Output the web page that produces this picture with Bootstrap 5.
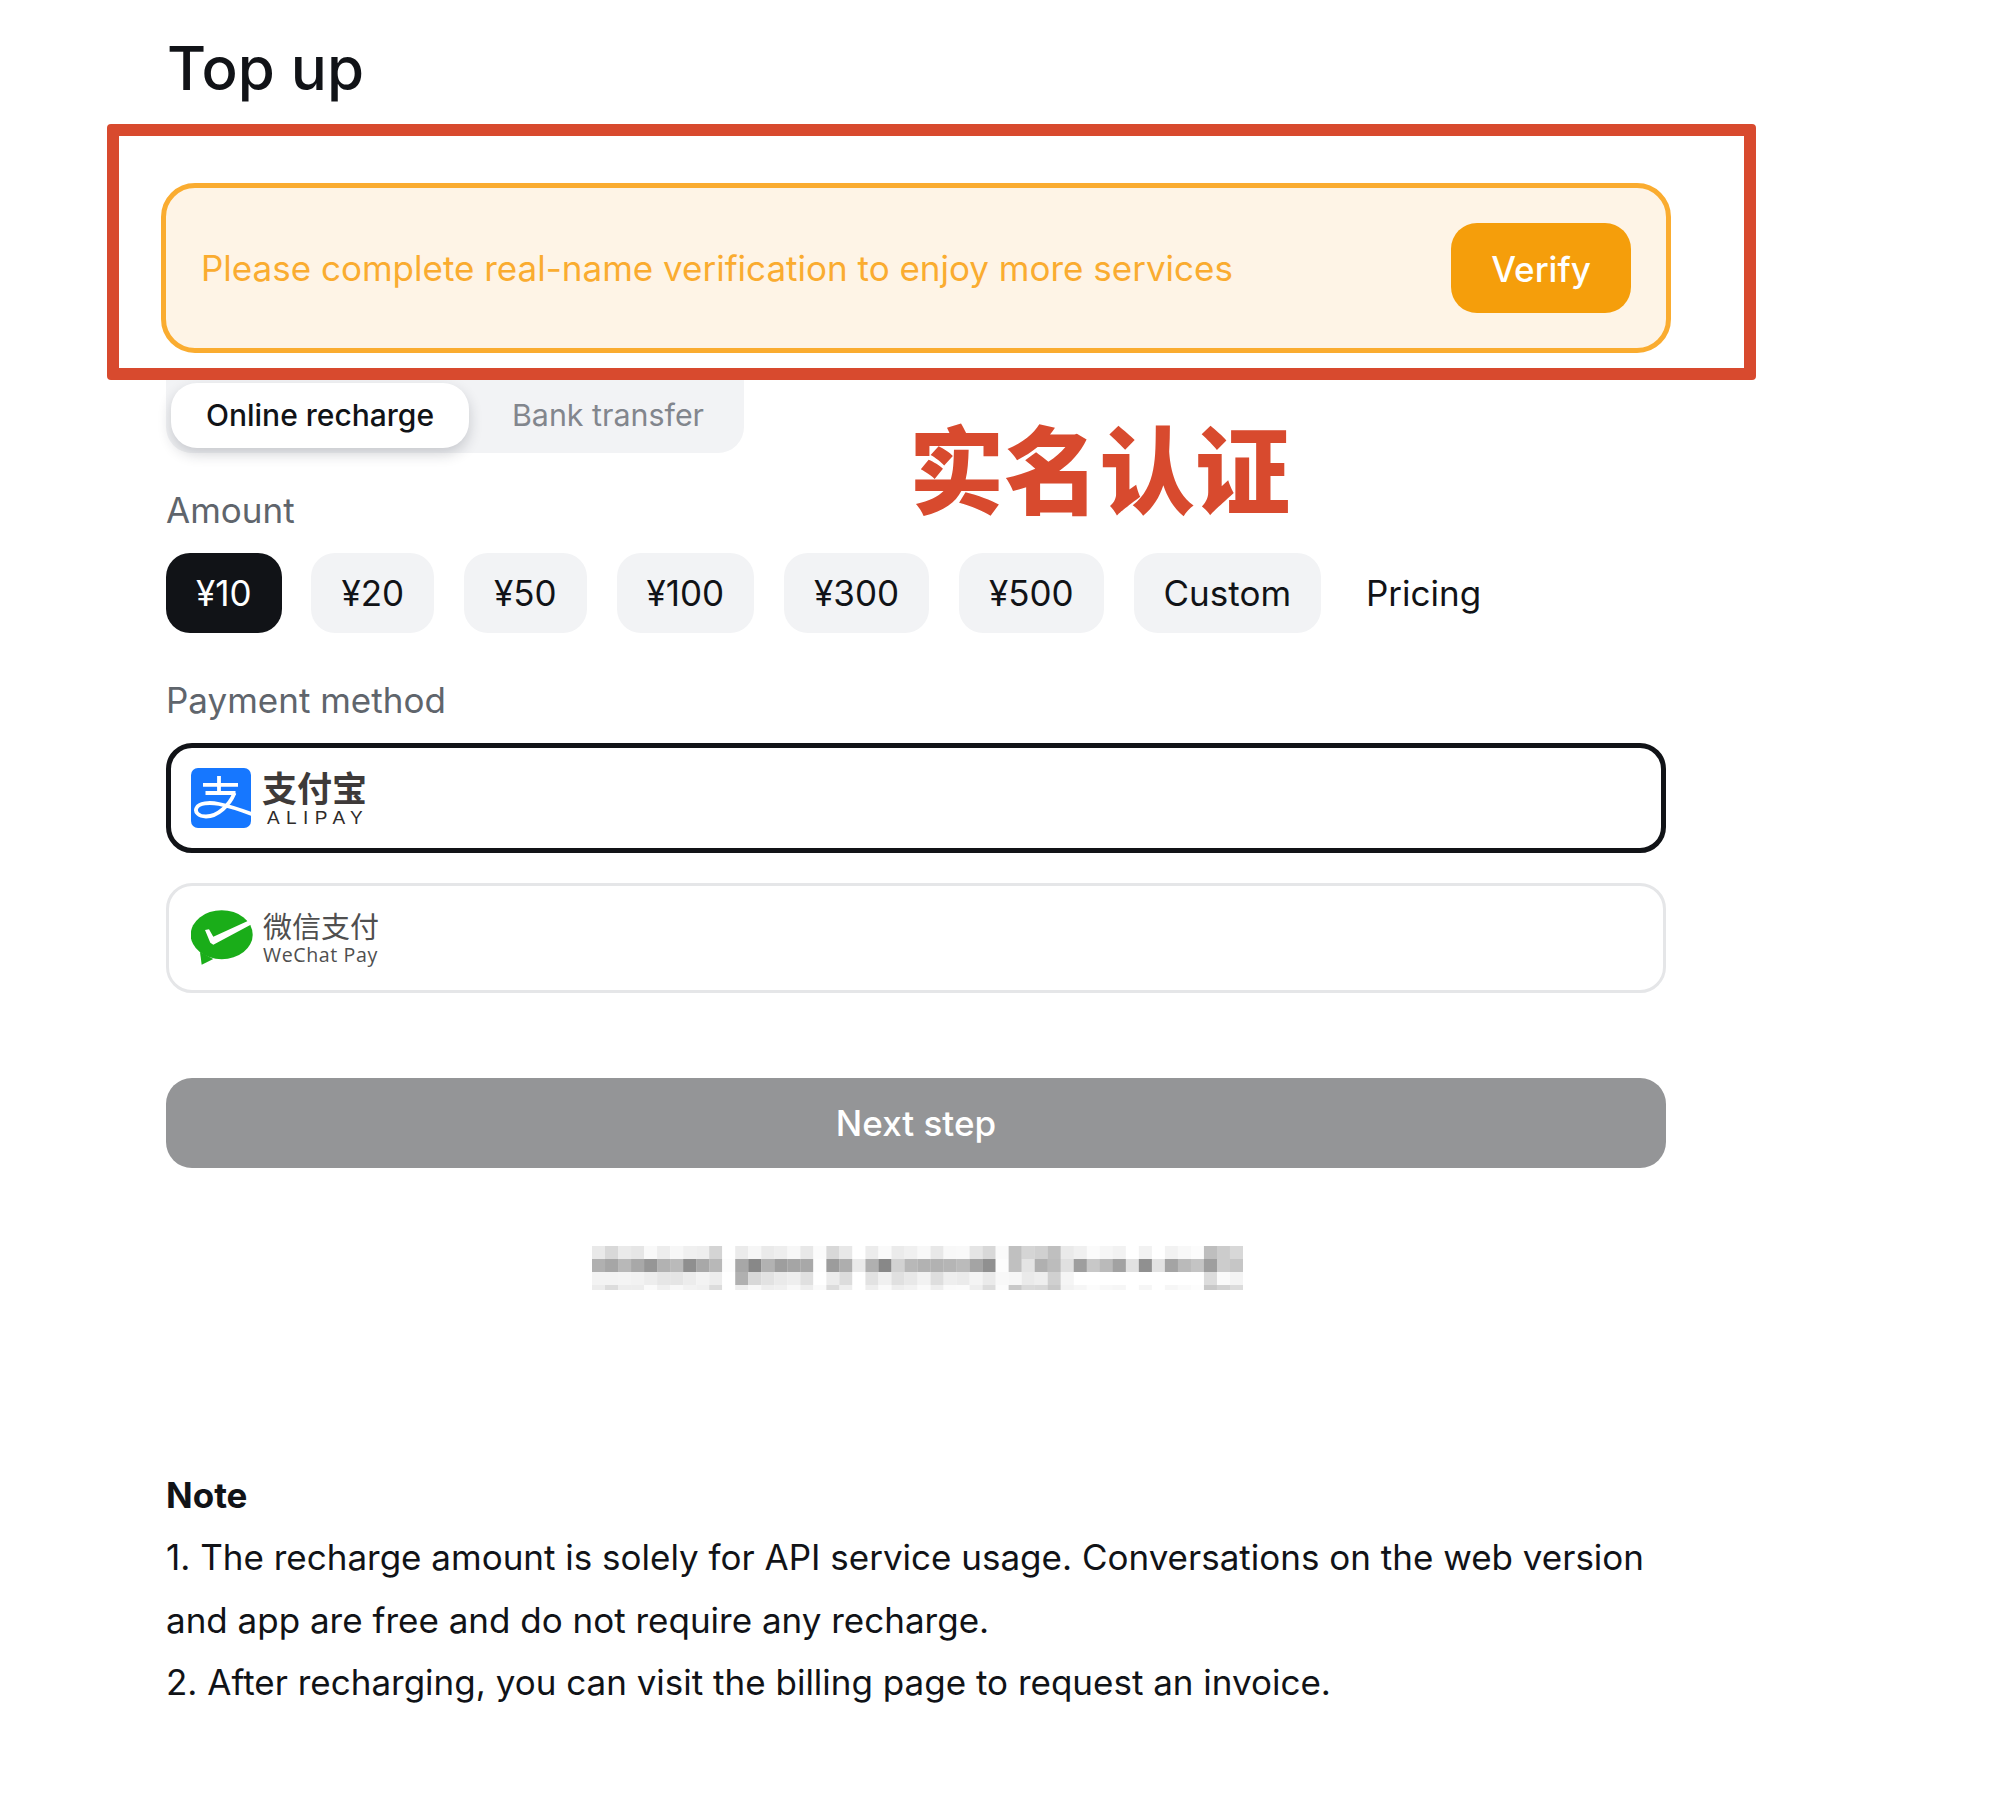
<!DOCTYPE html>
<html lang="en">
<head>
<meta charset="utf-8">
<title>Top up</title>
<link href="https://cdn.jsdelivr.net/npm/bootstrap@5.3.0/dist/css/bootstrap.min.css" rel="stylesheet">
<style>
body{font-family:Inter,"Noto Sans CJK SC",sans-serif;color:#111317;background:#fff;margin:0}
.tu-stage{position:relative;width:2011px;height:1796px;overflow:hidden}
.tu-col{width:1500px;margin-left:166px}
.tu-title{font-size:60px;font-weight:500;line-height:72px;margin:0;padding:32px 0 0 1px;height:183px;color:#111317}
.tu-alert{margin:0 -5px 0 -5px;height:170px;background:#fef4e6;border:5px solid #faac30;border-radius:34px;padding:0 35px 0 35px}
.tu-alert-text{font-size:35px;color:#faac30;line-height:44px}
.tu-verify{width:180px;height:90px;background:#f59e0b;border:0;border-radius:26px;color:#fff;font-size:35px;font-weight:500;padding:2px 0 0}
.tu-verify:hover{background:#f59e0b;color:#fff}
.tu-tabs{margin-top:25px;width:578px;height:75px;background:#f2f3f5;border-radius:0 0 26px 26px;padding:5px}
.tu-tab{height:65px;line-height:40px;display:flex;align-items:center;justify-content:center;border:0;border-radius:26px;padding-bottom:2px}
.tu-tab-on{width:298px;background:#fff;color:#111317;font-weight:500;font-size:30px;box-shadow:0 6px 14px rgba(30,36,48,.2)}
.tu-tab-off{width:270px;background:transparent;color:#82868d;font-size:30.4px;padding-left:8px}
.tu-label{font-size:35px;line-height:44px;color:#5f656c;margin-top:35px;margin-bottom:21px}
.tu-label-pay{margin-top:45px}
.tu-amounts{gap:29.9px;height:80px}
.tu-amt{height:80px;padding:0 30px;border:0;border-radius:24px;background:#f2f3f5;color:#111317;font-size:35px;line-height:80px}
.tu-amt:hover{background:#f2f3f5;color:#111317}
.tu-amt-on,.tu-amt-on:hover{background:#111317;color:#fff}
.tu-pricing{font-size:35px;line-height:80px;padding:0 0 0 15px;color:#111317}
.tu-pay{height:110px;border-radius:26px;background:#fff}
.tu-pay-on{border:5px solid #111317;padding:0 20px;gap:11px}
.tu-pay-off{border:3px solid #e5e6e8;margin-top:30px;padding:0 22px;gap:10px}
.tu-logo{width:60px;height:60px;flex:none}
.tu-logo-we{width:62px;height:56px;flex:none}
.tu-ali-cn{font-size:35px;font-weight:700;line-height:38px;color:#3e3a39}
.tu-ali-en{font-size:19px;line-height:19px;color:#2f2b2a;letter-spacing:6.4px;padding-left:5px;font-family:"Liberation Sans",sans-serif}
.tu-we-cn{font-size:29px;line-height:33px;color:#4f4f4f}
.tu-we-en{font-size:19.6px;line-height:21px;color:#4f4f4f;font-family:"Open Sans",sans-serif;letter-spacing:.6px}
.tu-next{display:block;width:100%;height:90px;margin-top:85px;background:#949597;border:0;border-radius:26px;color:#fff;font-size:35px;font-weight:500;padding:0}
.tu-next:hover{background:#949597;color:#fff}
.tu-blur{display:block;width:651px;height:44px;margin:78px 0 0 426px}
.tu-note{margin-top:173.5px;font-size:35px;line-height:62.6px;color:#111317}
.tu-note-h{font-weight:700}
.tu-frame{position:absolute;left:107px;top:124px;width:1649px;height:256px;border:12px solid #d84a2e;border-radius:4px;pointer-events:none}
.tu-stamp{position:absolute;left:909px;top:407px;font-family:"Noto Sans CJK SC",sans-serif;font-weight:900;font-size:95.3px;line-height:116px;color:#d84a2e;white-space:nowrap}
</style>
</head>
<body>
<div class="tu-stage">
  <div class="tu-col">
    <h1 class="tu-title">Top up</h1>
    <div class="tu-alert d-flex align-items-center justify-content-between">
      <span class="tu-alert-text">Please complete real-name verification to enjoy more services</span>
      <button type="button" class="btn tu-verify">Verify</button>
    </div>
    <div class="tu-tabs d-flex">
      <div class="tu-tab tu-tab-on">Online recharge</div>
      <div class="tu-tab tu-tab-off">Bank transfer</div>
    </div>
    <div class="tu-label">Amount</div>
    <div class="tu-amounts d-flex align-items-center">
      <button type="button" class="btn tu-amt tu-amt-on">¥10</button>
      <button type="button" class="btn tu-amt">¥20</button>
      <button type="button" class="btn tu-amt">¥50</button>
      <button type="button" class="btn tu-amt">¥100</button>
      <button type="button" class="btn tu-amt">¥300</button>
      <button type="button" class="btn tu-amt">¥500</button>
      <button type="button" class="btn tu-amt">Custom</button>
      <span class="tu-pricing">Pricing</span>
    </div>
    <div class="tu-label tu-label-pay">Payment method</div>
    <div class="tu-pay tu-pay-on d-flex align-items-center">
      <svg class="tu-logo" viewBox="0 0 60 60" aria-hidden="true">
        <defs><clipPath id="aliclip"><rect width="60" height="60" rx="7"/></clipPath></defs>
        <rect width="60" height="60" rx="7" fill="#1677ff"/>
        <g clip-path="url(#aliclip)" fill="none" stroke="#fff" stroke-width="3.8">
          <path d="M12 16.8H47M28 8V25M14.5 25H44.5"/>
          <path d="M43.5 25C38.5 37 27 48.5 15 48.5C7.5 48.5 3.5 44 5.5 40C8 35 18 34 28 36C40 38.5 50 42 62 46.5"/>
        </g>
      </svg>
      <div class="d-flex flex-column">
        <span class="tu-ali-cn">支付宝</span>
        <span class="tu-ali-en">ALIPAY</span>
      </div>
    </div>
    <div class="tu-pay tu-pay-off d-flex align-items-center">
      <svg class="tu-logo-we" viewBox="0 0 62 56" aria-hidden="true">
        <ellipse cx="30.7" cy="24.7" rx="31" ry="24.5" fill="#1aad19"/>
        <path d="M9 42L10.7 54.7L22.3 49Z" fill="#1aad19"/>
        <path d="M14 20L18 19.3L22.3 26.7L57.3 10.7L59.7 14.7L22.3 34.7L19.3 32.7Z" fill="#fff"/>
      </svg>
      <div class="d-flex flex-column">
        <span class="tu-we-cn">微信支付</span>
        <span class="tu-we-en">WeChat Pay</span>
      </div>
    </div>
    <button type="button" class="btn tu-next">Next step</button>
    <svg class="tu-blur" id="tuBlur" viewBox="0 0 650 44" preserveAspectRatio="none" aria-hidden="true"></svg>
    <div class="tu-note">
      <div class="tu-note-h">Note</div>
      <div>1. The recharge amount is solely for API service usage. Conversations on the web version and app are free and do not require any recharge.</div>
      <div>2. After recharging, you can visit the billing page to request an invoice.</div>
    </div>
  </div>
  <div class="tu-frame"></div>
  <div class="tu-stamp">实名认证</div>
</div>
<script>
(function(){
  var rows=[
   {y:0,h:13,c:"e9 d8 ea e6 f9 ed f7 f0 ee d4 ff eb f6 ea ee f7 e8 fb d8 e8 ff ec fa eb f0 f8 e8 f8 f9 e5 d8 fa c0 d5 d0 bf ea f0 fb f6 f2 ff f2 ff f2 f8 fc be cc d8"},
   {y:13,h:13,c:"b0 a6 b8 a8 96 b2 ba 8f a8 b8 fc a7 88 b2 9e a5 a8 fd 9c ae ea b0 88 d2 b8 b2 b2 b5 bb a4 90 fc c0 e4 b0 bc e0 9e c8 ba a2 e2 90 e2 a4 ba c4 9e cc c6"},
   {y:26,h:13,c:"f3 f3 f4 f2 ed e6 e5 ec f3 ed ff b0 d8 e2 ea ee e0 ff ec dc ff e2 f0 e0 e8 f2 de ee eb f4 ea f8 f6 ea ee d0 f5 ff ff ff ff ff ff ff ff ff ff dc fa f4"},
   {y:39,h:5,c:"ec dc ed ed fa f0 f8 f2 f0 dc ff ee f8 ee f0 f8 ee fa dc ee ff ee fa ee f2 fa ee fa fb ee dc fb c8 da d8 c8 f2 f6 fc f8 f6 ff f6 ff f6 fa fd c8 d2 dc"}
  ];
  var out="";
  rows.forEach(function(r){
    r.c.split(" ").forEach(function(v,i){
      out+='<rect x="'+(i*13)+'" y="'+r.y+'" width="13.2" height="'+r.h+'" fill="#'+v+v+v+'"/>';
    });
  });
  document.getElementById("tuBlur").innerHTML=out;
})();
</script>
<script src="https://cdn.jsdelivr.net/npm/bootstrap@5.3.0/dist/js/bootstrap.bundle.min.js"></script>
</body>
</html>
